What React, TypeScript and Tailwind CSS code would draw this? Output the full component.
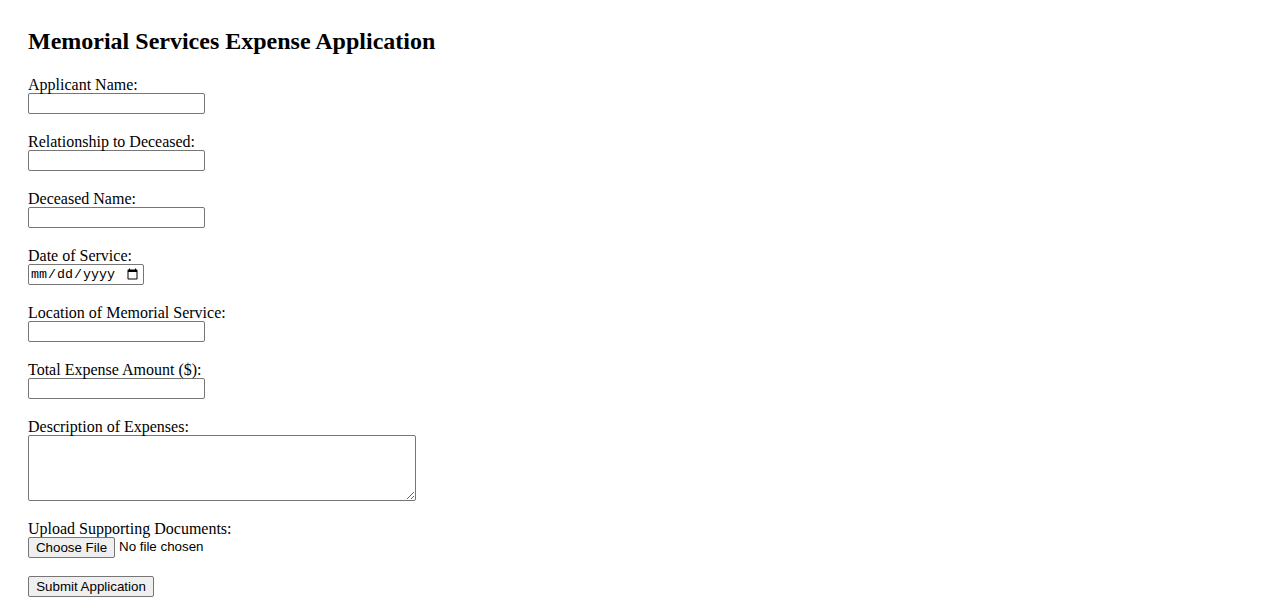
import React from "react";

const serif = { fontFamily: '"Liberation Serif", "Times New Roman", serif' };

function Field({ label, children, mb = "mb-[18px]" }: { label: string; children: React.ReactNode; mb?: string }) {
  return (
    <div className={mb}>
      <label className="block pt-[1px] text-[16px] leading-[17px] text-black">{label}</label>
      {children}
    </div>
  );
}

const inputCls =
  "block w-[177px] h-[21px] border border-[#767676] rounded-[2px] bg-white px-[2px] text-[13.33px] font-['Liberation_Sans',Arial,sans-serif] outline-none";

const btnCls =
  "h-[21px] border border-[#767676] rounded-[2px] bg-[#efefef] px-[6px] text-[13.33px] leading-[17px] text-black font-['Liberation_Sans',Arial,sans-serif]";

export default function App() {
  return (
    <div className="min-h-[601px] bg-white pt-[28px] pl-[28px] text-black" style={serif}>
      <h2 className="text-[24px] leading-[26px] font-bold mb-[21px]">Memorial Services Expense Application</h2>
      <form onSubmit={(e) => e.preventDefault()}>
        <Field label="Applicant Name:">
          <input type="text" className={inputCls} />
        </Field>
        <Field label="Relationship to Deceased:">
          <input type="text" className={inputCls} />
        </Field>
        <Field label="Deceased Name:">
          <input type="text" className={inputCls} />
        </Field>
        <Field label="Date of Service:">
          <input
            type="date"
            className="block w-[116px] h-[21px] border border-[#767676] rounded-[2px] bg-white pl-[1px] pr-[2px] text-[13.33px] leading-[17px] font-['Liberation_Mono','Courier_New',monospace] text-black outline-none"
          />
        </Field>
        <Field label="Location of Memorial Service:">
          <input type="text" className={inputCls} />
        </Field>
        <Field label="Total Expense Amount ($):">
          <input type="text" className={inputCls} />
        </Field>
        <Field label="Description of Expenses:">
          <textarea className="block w-[388px] h-[66px] border border-[#767676] rounded-[2px] bg-white p-[2px] text-[13.33px] font-['Liberation_Mono',monospace] outline-none" />
        </Field>
        <Field label="Upload Supporting Documents:" mb="mb-[19px]">
          <div className="flex items-center h-[20px]">
            <button type="button" className={btnCls + " w-[87px]"}>
              Choose File
            </button>
            <span className="ml-[4px] text-[13.33px] font-['Liberation_Sans',Arial,sans-serif]">No file chosen</span>
          </div>
        </Field>
        <button type="submit" className={btnCls + " block w-[126px]"}>
          Submit Application
        </button>
      </form>
    </div>
  );
}
